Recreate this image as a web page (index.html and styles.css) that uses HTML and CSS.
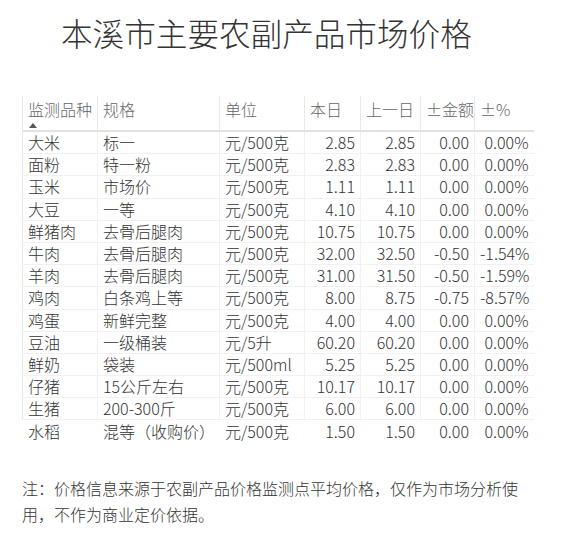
FILE: index.html
```html
<!DOCTYPE html>
<html lang="zh-CN">
<head>
<meta charset="utf-8">
<title>本溪市主要农副产品市场价格</title>
<link rel="stylesheet" href="styles.css">
</head>
<body>
<div class="page">
  <h1 class="title">本溪市主要农副产品市场价格</h1>
  <table class="prices">
    <colgroup>
      <col class="c1"><col class="c2"><col class="c3"><col class="c4"><col class="c5"><col class="c6"><col class="c7">
    </colgroup>
    <thead>
      <tr>
        <th><span class="hd">监测品种</span><span class="sort"></span></th>
        <th>规格</th>
        <th>单位</th>
        <th>本日</th>
        <th>上一日</th>
        <th>±金额</th>
        <th>±%</th>
      </tr>
    </thead>
    <tbody>
      <tr><td>大米</td><td>标一</td><td>元/500克</td><td class="n">2.85</td><td class="n">2.85</td><td class="n">0.00</td><td class="n">0.00%</td></tr>
      <tr><td>面粉</td><td>特一粉</td><td>元/500克</td><td class="n">2.83</td><td class="n">2.83</td><td class="n">0.00</td><td class="n">0.00%</td></tr>
      <tr><td>玉米</td><td>市场价</td><td>元/500克</td><td class="n">1.11</td><td class="n">1.11</td><td class="n">0.00</td><td class="n">0.00%</td></tr>
      <tr><td>大豆</td><td>一等</td><td>元/500克</td><td class="n">4.10</td><td class="n">4.10</td><td class="n">0.00</td><td class="n">0.00%</td></tr>
      <tr><td>鲜猪肉</td><td>去骨后腿肉</td><td>元/500克</td><td class="n">10.75</td><td class="n">10.75</td><td class="n">0.00</td><td class="n">0.00%</td></tr>
      <tr><td>牛肉</td><td>去骨后腿肉</td><td>元/500克</td><td class="n">32.00</td><td class="n">32.50</td><td class="n">-0.50</td><td class="n">-1.54%</td></tr>
      <tr><td>羊肉</td><td>去骨后腿肉</td><td>元/500克</td><td class="n">31.00</td><td class="n">31.50</td><td class="n">-0.50</td><td class="n">-1.59%</td></tr>
      <tr><td>鸡肉</td><td>白条鸡上等</td><td>元/500克</td><td class="n">8.00</td><td class="n">8.75</td><td class="n">-0.75</td><td class="n">-8.57%</td></tr>
      <tr><td>鸡蛋</td><td>新鲜完整</td><td>元/500克</td><td class="n">4.00</td><td class="n">4.00</td><td class="n">0.00</td><td class="n">0.00%</td></tr>
      <tr><td>豆油</td><td>一级桶装</td><td>元/5升</td><td class="n">60.20</td><td class="n">60.20</td><td class="n">0.00</td><td class="n">0.00%</td></tr>
      <tr><td>鲜奶</td><td>袋装</td><td>元/500ml</td><td class="n">5.25</td><td class="n">5.25</td><td class="n">0.00</td><td class="n">0.00%</td></tr>
      <tr><td>仔猪</td><td>15公斤左右</td><td>元/500克</td><td class="n">10.17</td><td class="n">10.17</td><td class="n">0.00</td><td class="n">0.00%</td></tr>
      <tr><td>生猪</td><td>200-300斤</td><td>元/500克</td><td class="n">6.00</td><td class="n">6.00</td><td class="n">0.00</td><td class="n">0.00%</td></tr>
      <tr class="last"><td>水稻</td><td>混等（收购价）</td><td>元/500克</td><td class="n">1.50</td><td class="n">1.50</td><td class="n">0.00</td><td class="n">0.00%</td></tr>
    </tbody>
  </table>
  <p class="note">注：价格信息来源于农副产品价格监测点平均价格，仅作为市场分析使用，不作为商业定价依据。</p>
</div>
</body>
</html>
```

FILE: styles.css
```css
html, body {
  margin: 0;
  padding: 0;
  background: #ffffff;
}

body {
  font-family: "Noto Sans CJK SC", "Noto Sans", sans-serif;
  font-weight: 300;
  color: #333333;
}

.page {
  padding: 0 0 0 22px;
  width: 511px;
}

.title {
  margin: 8px 0 0 39px;
  font-size: 31.6px;
  font-weight: 300;
  line-height: 48px;
  color: #333333;
}

.prices {
  margin-top: 40px;
  border-collapse: collapse;
  table-layout: fixed;
  width: 511px;
  font-size: 16px;
}

.c1 { width: 75px; }
.c2 { width: 122px; }
.c3 { width: 85px; }
.c4 { width: 56px; }
.c5 { width: 60px; }
.c6 { width: 54px; }
.c7 { width: 59px; }

.prices th {
  font-weight: 300;
  color: #666666;
  text-align: left;
  vertical-align: top;
  padding: 2px 5px 0 5px;
  height: 32px;
  line-height: 22px;
  border-left: 1px solid #e8e8e8;
  border-bottom: 2px solid #e2e2e2;
  white-space: nowrap;
}

.prices th:first-child {
  position: relative;
}

.hd {
  display: block;
}

.sort {
  position: absolute;
  left: 6px;
  top: 27px;
  width: 0;
  height: 0;
  border-left: 4px solid transparent;
  border-right: 4px solid transparent;
  border-bottom: 5px solid #555555;
}

.prices td {
  padding: 0 5px;
  height: 21.2px;
  line-height: 21px;
  border-left: 1px solid #f1f1f1;
  border-bottom: 1px solid #f1f1f1;
  white-space: nowrap;
  color: #333333;
}

.prices th:first-child,
.prices td:first-child {
  border-left: 1px solid #e8e8e8;
}

.prices td.n {
  text-align: right;
  padding-right: 5px;
}

.prices tr.last td {
  border-bottom: none;
  border-left-color: transparent;
}

.note {
  margin: 33px 0 0 0;
  font-size: 16px;
  line-height: 26px;
  color: #333333;
}
```
